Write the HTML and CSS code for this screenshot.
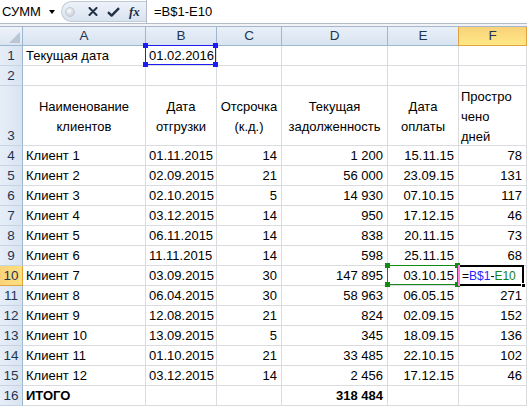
FILE: index.html
```html
<!DOCTYPE html>
<html lang="ru">
<head>
<meta charset="utf-8">
<link rel="stylesheet" href="styles.css">
</head>
<body>
<div class="app">
  <div class="fbar">
    <div class="namebox"><span class="name">СУММ</span><span class="dd"></span></div>
    <div class="pill">
      <span class="dot"></span>
      <svg class="ico x" width="10" height="9" viewBox="0 0 10 9"><path d="M1.5 1 L8.5 8 M8.5 1 L1.5 8" stroke="#1f2f46" stroke-width="2" stroke-linecap="round"/></svg>
      <svg class="ico ok" width="13" height="10" viewBox="0 0 13 10"><path d="M1 5.2 L4.6 8.6 L12 1.2" fill="none" stroke="#1f2f46" stroke-width="2.4" stroke-linejoin="round"/></svg>
      <span class="fx">fx</span>
    </div>
    <div class="finput">=B$1-E10</div>
  </div>
  <div class="band"></div>
  <div class="sheet">
    <div class="corner"><svg width="23" height="19" viewBox="0 0 23 19"><path d="M20 5 L20 16 L9 16 Z" fill="#b9c6d6"/></svg></div>
    <div class="ch">A</div><div class="ch">B</div><div class="ch">C</div><div class="ch">D</div><div class="ch">E</div><div class="ch sel">F</div>

    <div class="rh">1</div><div class="c">Текущая дата</div><div class="c r refb"><span class="hl"></span>01.02.2016</div><div class="c"></div><div class="c"></div><div class="c"></div><div class="c"></div>
    <div class="rh">2</div><div class="c"></div><div class="c"></div><div class="c"></div><div class="c"></div><div class="c"></div><div class="c"></div>
    <div class="rh">3</div><div class="c hd">Наименование<br>клиентов</div><div class="c hd">Дата<br>отгрузки</div><div class="c hd">Отсрочка<br>(к.д.)</div><div class="c hd">Текущая<br>задолженность</div><div class="c hd">Дата<br>оплаты</div><div class="c hd left">Простро<br>чено<br>дней</div>

    <div class="rh">4</div><div class="c">Клиент 1</div><div class="c r">01.11.2015</div><div class="c r">14</div><div class="c r">1 200</div><div class="c r">15.11.15</div><div class="c r">78</div>
    <div class="rh">5</div><div class="c">Клиент 2</div><div class="c r">02.09.2015</div><div class="c r">21</div><div class="c r">56 000</div><div class="c r">23.09.15</div><div class="c r">131</div>
    <div class="rh">6</div><div class="c">Клиент 3</div><div class="c r">02.10.2015</div><div class="c r">5</div><div class="c r">14 930</div><div class="c r">07.10.15</div><div class="c r">117</div>
    <div class="rh">7</div><div class="c">Клиент 4</div><div class="c r">03.12.2015</div><div class="c r">14</div><div class="c r">950</div><div class="c r">17.12.15</div><div class="c r">46</div>
    <div class="rh">8</div><div class="c">Клиент 5</div><div class="c r">06.11.2015</div><div class="c r">14</div><div class="c r">838</div><div class="c r">20.11.15</div><div class="c r">73</div>
    <div class="rh">9</div><div class="c">Клиент 6</div><div class="c r">11.11.2015</div><div class="c r">14</div><div class="c r">598</div><div class="c r">25.11.15</div><div class="c r">68</div>
    <div class="rh sel">10</div><div class="c">Клиент 7</div><div class="c r">03.09.2015</div><div class="c r">30</div><div class="c r">147 895</div><div class="c r refe"><span class="hl"></span>03.10.15</div><div class="c active"><span class="eq">=</span><span class="tb">B$1</span><span class="eq">-</span><span class="te">E10</span><span class="fill"></span></div>
    <div class="rh">11</div><div class="c">Клиент 8</div><div class="c r">06.04.2015</div><div class="c r">30</div><div class="c r">58 963</div><div class="c r">06.05.15</div><div class="c r">271</div>
    <div class="rh">12</div><div class="c">Клиент 9</div><div class="c r">12.08.2015</div><div class="c r">21</div><div class="c r">824</div><div class="c r">02.09.15</div><div class="c r">152</div>
    <div class="rh">13</div><div class="c">Клиент 10</div><div class="c r">13.09.2015</div><div class="c r">5</div><div class="c r">345</div><div class="c r">18.09.15</div><div class="c r">136</div>
    <div class="rh">14</div><div class="c">Клиент 11</div><div class="c r">01.10.2015</div><div class="c r">21</div><div class="c r">33 485</div><div class="c r">22.10.15</div><div class="c r">102</div>
    <div class="rh">15</div><div class="c">Клиент 12</div><div class="c r">03.12.2015</div><div class="c r">14</div><div class="c r">2 456</div><div class="c r">17.12.15</div><div class="c r">46</div>
    <div class="rh">16</div><div class="c b">ИТОГО</div><div class="c"></div><div class="c"></div><div class="c r b">318 484</div><div class="c"></div><div class="c"></div>
  </div>
</div>
</body>
</html>
```
FILE: styles.css
```css
* { box-sizing: border-box; }
html, body { margin: 0; padding: 0; background: #fff; }
body { font-family: "Liberation Sans", Arial, sans-serif; font-size: 13px; color: #000; width: 527px; height: 407px; overflow: hidden; }

.fbar { display: flex; height: 24px; border-bottom: 1px solid #b3bcc8; background: #fff; }
.namebox { width: 61px; display: flex; align-items: center; padding-left: 2px; }
.name { font-size: 13px; }
.dd { margin-left: 8px; width: 0; height: 0; border-left: 3.5px solid transparent; border-right: 3.5px solid transparent; border-top: 4px solid #000; margin-top: 1px; }
.pill { width: 85px; height: 21px; margin-top: 1px; display: flex; align-items: center; border: 1px solid #c0cbd9; border-right: none; border-radius: 11px 0 0 11px; background: linear-gradient(#edf2f9, #d9e3f0); }
.dot { width: 10px; height: 10px; border-radius: 50%; margin-left: 3px; background: radial-gradient(circle at 40% 35%, #fafbfc, #cdd4dd 70%); border: 1px solid #c3cad4; }
.ico.x { margin-left: 13px; }
.ico.ok { margin-left: 9px; }
.fx { margin-left: 9px; font-family: "Liberation Serif", "DejaVu Serif", serif; font-style: italic; font-weight: bold; font-size: 13px; color: #1f2f46; }
.finput { flex: 1; border-left: 1px solid #b3bcc8; padding-left: 7px; line-height: 23px; }

.band { height: 3px; background: #f1f3f6; border-bottom: 1px solid #a7b6c9; }

.sheet { display: grid; grid-template-columns: 23px 123px 71px 65px 106px 71px 68px; grid-template-rows: 19px 20px 20px 60px repeat(13, 20px); }
.corner { background: linear-gradient(#eef3fa, #dbe5f1); border-right: 1px solid #9eb6ce; border-bottom: 1px solid #9eb6ce; }
.corner svg { display: block; }
.ch { background: linear-gradient(#e8eff8, #d9e4f1); border-right: 1px solid #9eb6ce; border-bottom: 1px solid #9eb6ce; text-align: center; line-height: 18px; color: #1e3552; font-size: 13.5px; }
.ch.sel { background: linear-gradient(#f8d27a, #ffe885); border-left: 1px solid #e0a33f; border-right: 1px solid #e0a33f; border-bottom: 1px solid #e0a33f; margin-left: -1px; }
.rh { background: linear-gradient(90deg, #e6eef8, #d9e4f1); border-right: 1px solid #9eb6ce; border-bottom: 1px solid #c6d3e3; color: #1e3552; display: flex; align-items: flex-end; justify-content: center; padding-bottom: 1px; line-height: 17px; font-size: 13.5px; }
.rh.sel { background: linear-gradient(90deg, #f9d37a, #fde07f); border-right-color: #e0a33f; border-bottom-color: #e0a33f; }

.c { border-right: 1px solid #d9dbde; border-bottom: 1px solid #d9dbde; padding: 0 4px 0 3px; line-height: 20px; white-space: nowrap; overflow: visible; position: relative; }
.c.r { text-align: right; }
.c.b { font-weight: bold; }
.c.hd { display: flex; align-items: center; justify-content: center; text-align: center; line-height: 19.5px; padding: 2px 0 0; }
.c.hd.left { justify-content: flex-start; text-align: left; padding-left: 2px; line-height: 20px; }

.refb::after { content: ""; position: absolute; left: -1px; top: -1px; right: 0; bottom: 0; border: 1.5px solid #1c1cf5; }
.refe::after { content: ""; position: absolute; left: -1px; top: -1px; right: 0; bottom: 0; border: 1.5px solid #138a13; }
.hl { position: absolute; inset: -3px -2px -2px -3px; pointer-events: none; z-index: 2;
  --k: #1c1cf5;
  background:
    linear-gradient(var(--k), var(--k)) left top / 5px 5px no-repeat,
    linear-gradient(var(--k), var(--k)) right top / 5px 5px no-repeat,
    linear-gradient(var(--k), var(--k)) left bottom / 5px 5px no-repeat,
    linear-gradient(var(--k), var(--k)) right bottom / 5px 5px no-repeat; }
.refe .hl { --k: #138a13; }

.active { padding-left: 3px; font-size: 12px; }
.active::before { content: ""; position: absolute; left: -1px; top: -1px; width: 2px; bottom: -1px; background: #ff7ee0; z-index: 3; }
.active::after { content: ""; position: absolute; left: 0; top: -1px; right: 2px; bottom: -1px; border: 2px solid #000; border-left: none; }
.fill { position: absolute; right: 0; bottom: -3px; width: 5px; height: 5px; background: #000; border: 1px solid #fff; z-index: 4; }
.eq { color: #000; }
.tb { color: #2626ff; }
.te { color: #148314; }
```
